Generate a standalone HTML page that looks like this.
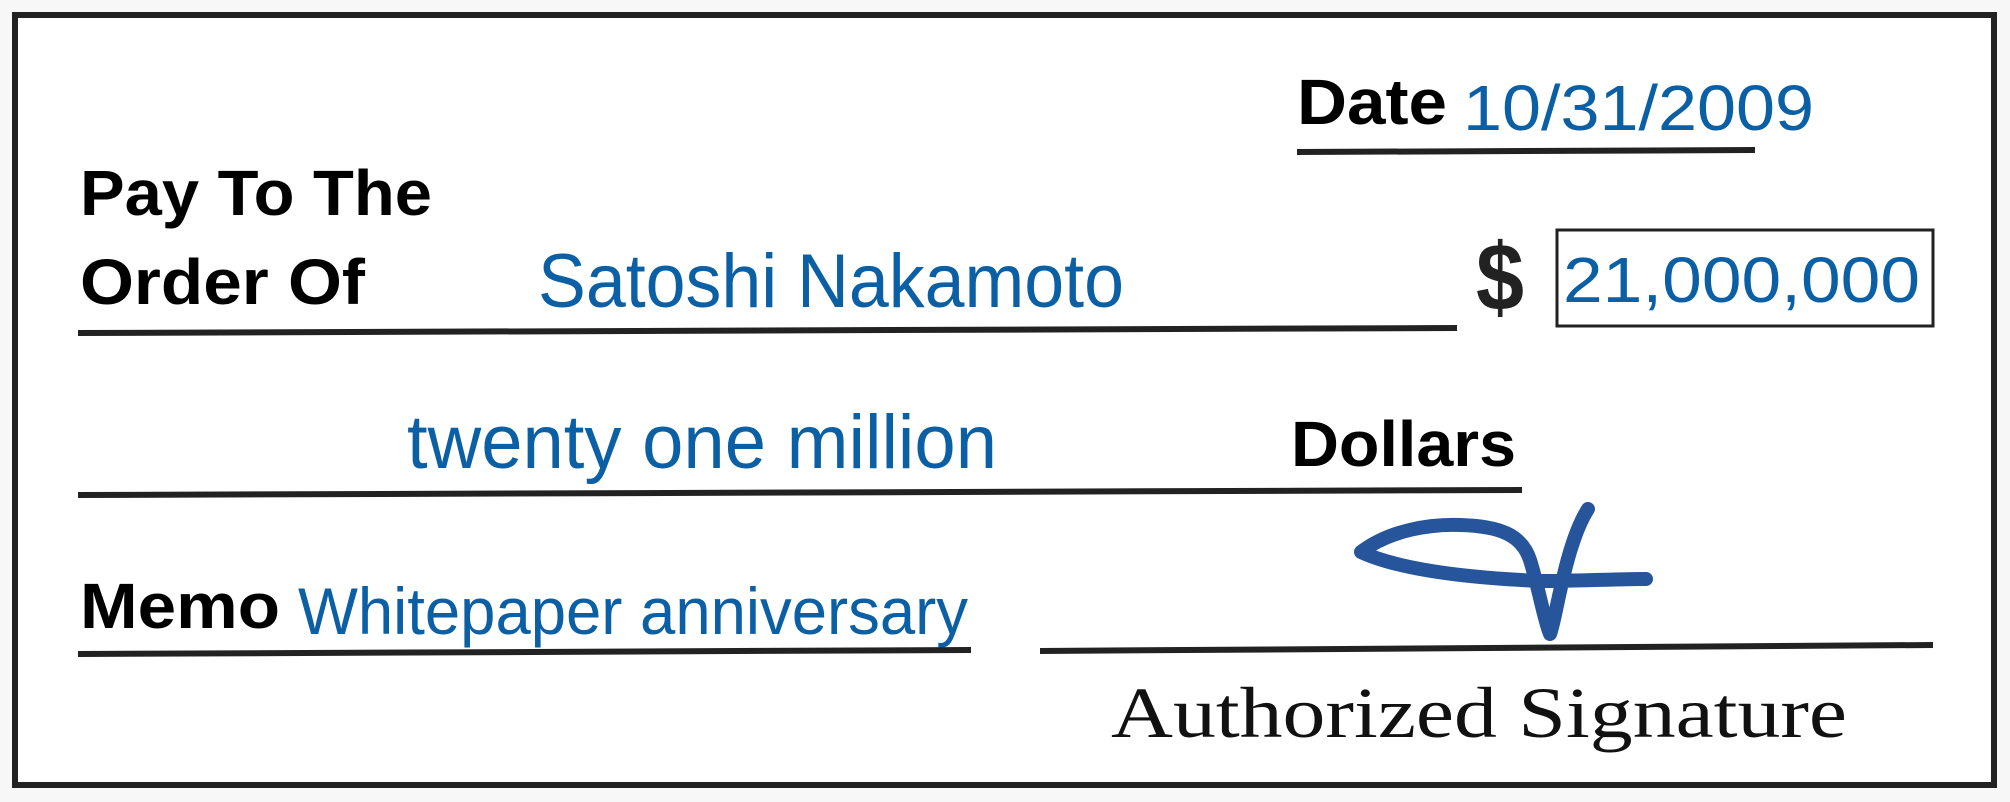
<!DOCTYPE html>
<html><head><meta charset="utf-8"><style>
html,body{margin:0;padding:0;background:#f7f7f7;}
svg{display:block}
.b{font-family:"Liberation Sans",sans-serif;font-weight:bold;fill:#000}
.h{font-family:"Liberation Sans",sans-serif;fill:#0b5fa5}
</style></head><body>
<svg width="2010" height="802" viewBox="0 0 2010 802" xmlns="http://www.w3.org/2000/svg">
<rect x="0" y="0" width="2010" height="802" fill="#f7f7f7"/>
<rect x="15" y="15" width="1979" height="770" fill="#fff" stroke="#222" stroke-width="6"/>
<g class="b" font-size="64">
<text x="80" y="215" textLength="352" lengthAdjust="spacingAndGlyphs">Pay To The</text>
<text x="80" y="304" textLength="285" lengthAdjust="spacingAndGlyphs">Order Of</text>
<text x="80" y="628" textLength="200" lengthAdjust="spacingAndGlyphs">Memo</text>
<text x="1297" y="124" textLength="150" lengthAdjust="spacingAndGlyphs">Date</text>
<text x="1291" y="466" textLength="225" lengthAdjust="spacingAndGlyphs">Dollars</text>
</g>
<text x="1476" y="310" font-family="Liberation Sans,sans-serif" font-weight="bold" font-size="96" fill="#222" textLength="48" lengthAdjust="spacingAndGlyphs">$</text>
<g class="h">
<text x="538" y="307" font-size="76" textLength="586" lengthAdjust="spacingAndGlyphs">Satoshi Nakamoto</text>
<text x="407" y="468" font-size="76" textLength="590" lengthAdjust="spacingAndGlyphs">twenty one million</text>
<text x="298" y="634" font-size="66" textLength="670" lengthAdjust="spacingAndGlyphs">Whitepaper anniversary</text>
<text x="1463" y="130" font-size="64" textLength="351" lengthAdjust="spacingAndGlyphs">10/31/2009</text>
<text x="1563" y="302" font-size="64" textLength="357" lengthAdjust="spacingAndGlyphs">21,000,000</text>
</g>
<g stroke="#222" stroke-width="6" fill="none">
<line x1="1297" y1="152" x2="1755" y2="150"/>
<line x1="78" y1="333" x2="1457" y2="328"/>
<line x1="78" y1="495" x2="1522" y2="490"/>
<line x1="78" y1="654" x2="971" y2="650"/>
<line x1="1040" y1="651" x2="1933" y2="645"/>
</g>
<rect x="1557" y="230" width="376" height="96" fill="none" stroke="#222" stroke-width="3"/>
<text x="1111" y="737" font-family="Liberation Serif,serif" font-size="72" fill="#111" textLength="736" lengthAdjust="spacingAndGlyphs">Authorized Signature</text>
<path d="M1361 552 C1390 530 1430 524 1460 525 C1500 526 1522 535 1530 560 C1538 585 1544 620 1550 634 C1556 620 1565 545 1588 509 M1361 552 C1400 570 1470 578 1540 581 C1580 581 1615 579 1646 579" fill="none" stroke="#27559b" stroke-width="14" stroke-linecap="round" stroke-linejoin="round"/>
</svg>
</body></html>
